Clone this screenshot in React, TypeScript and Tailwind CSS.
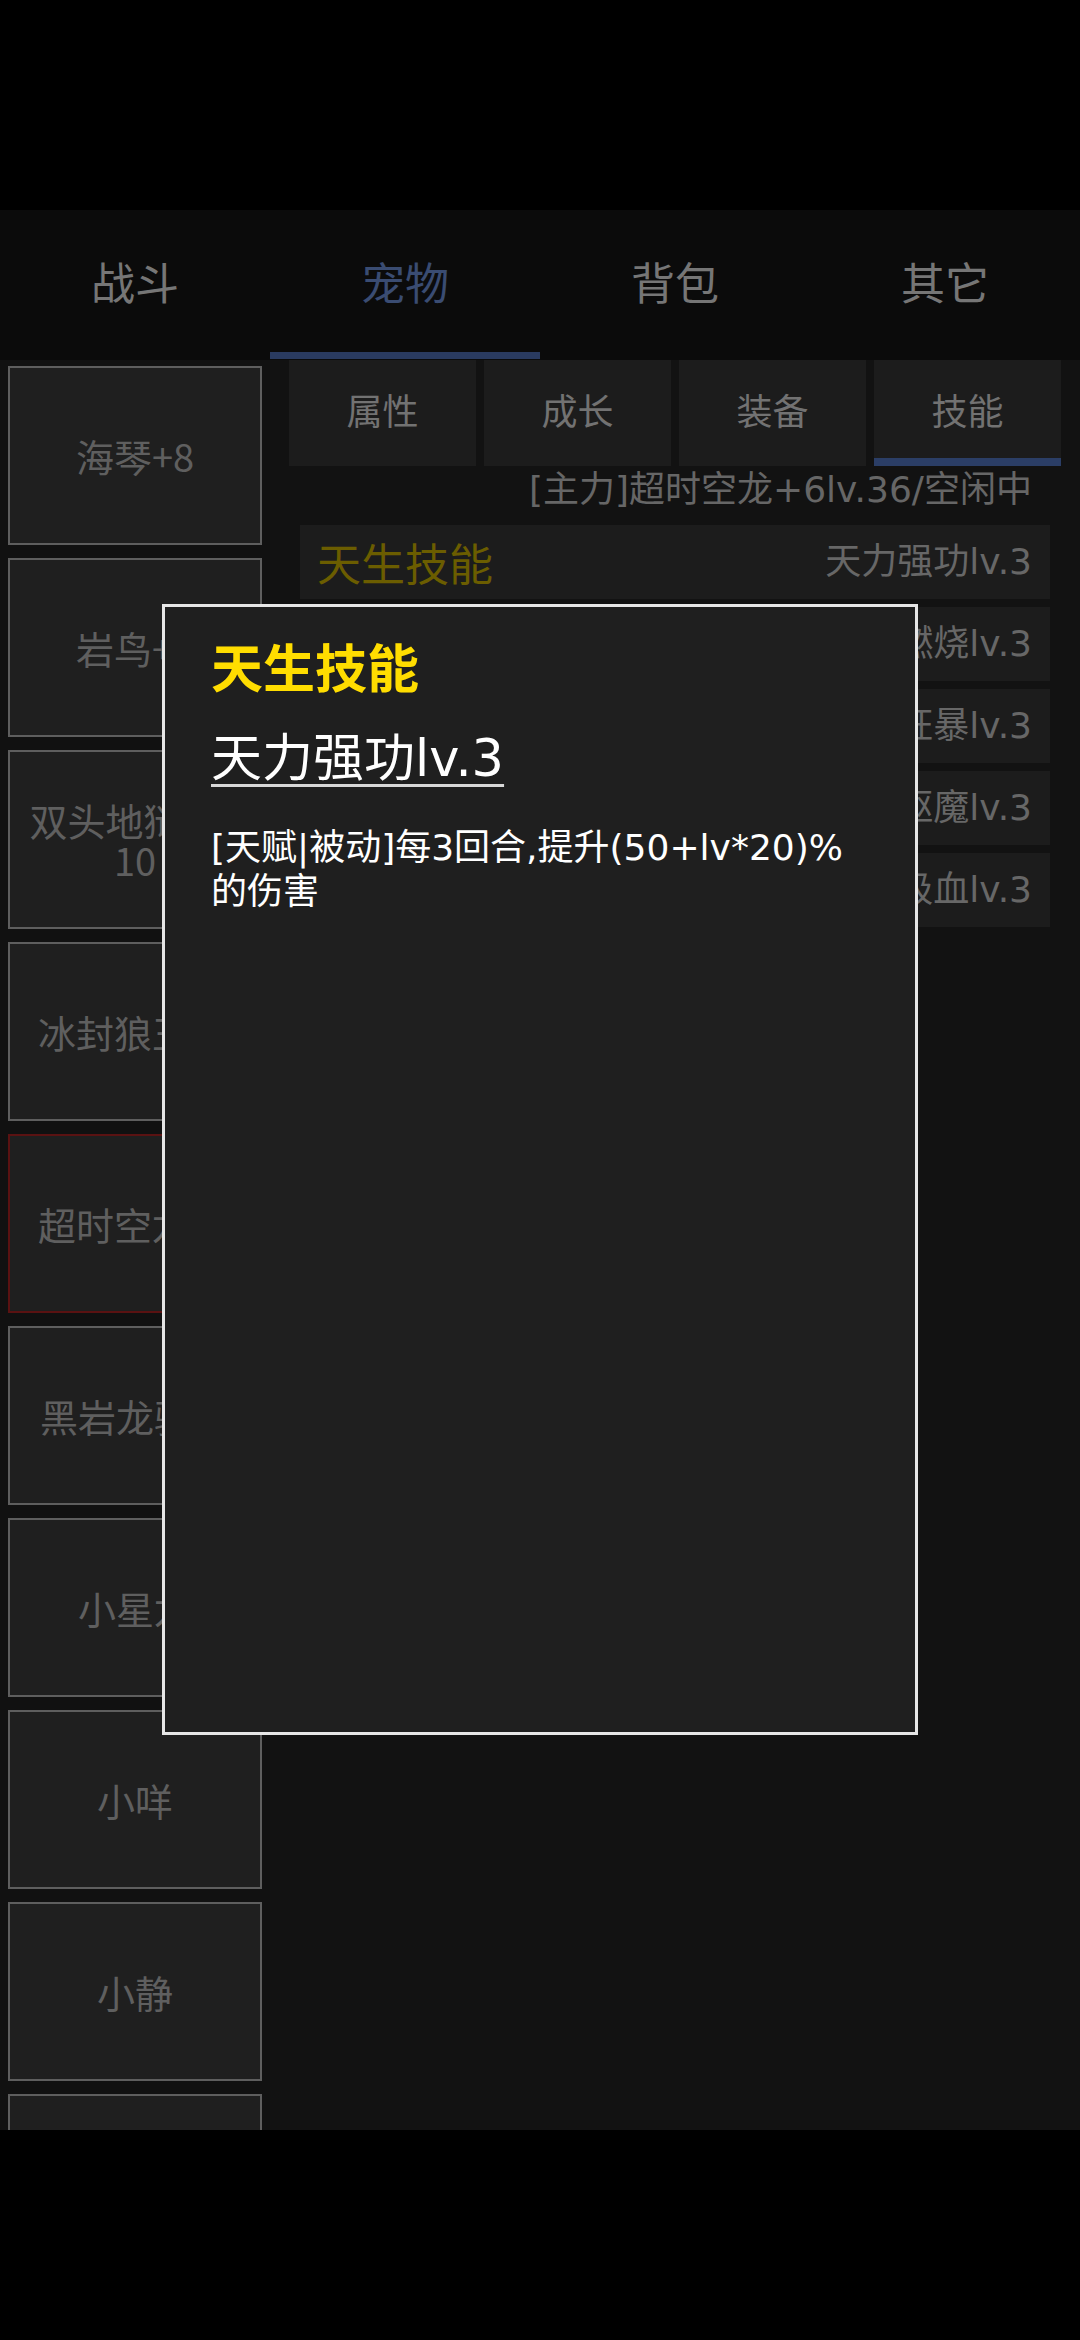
import { useState } from "react";

const tabs = ["战斗", "宠物", "背包", "其它"];
const subTabs = ["属性", "成长", "装备", "技能"];

const pets: { name: React.ReactNode; selected?: boolean }[] = [
    { name: "海琴+8" },
    { name: "岩鸟+7" },
    { name: <>双头地狱犬+<br />10</> },
    { name: "冰封狼王+5" },
    { name: "超时空龙+6", selected: true },
    { name: "黑岩龙骑士" },
    { name: "小星龙" },
    { name: "小咩" },
    { name: "小静" },
    { name: "小羽" },
];

const skills = [
    { label: "天生技能", value: "天力强功lv.3" },
    { label: "", value: "烈焰燃烧lv.3" },
    { label: "", value: "嗜血狂暴lv.3" },
    { label: "", value: "神圣驱魔lv.3" },
    { label: "", value: "生命吸血lv.3" },
];

export default function App() {
    const [tab] = useState(1);
    const [subTab] = useState(3);

    return (
        <div className="relative w-[1080px] h-[2340px] bg-black flex flex-col overflow-hidden font-['Noto_Sans_CJK_SC',sans-serif]">
            {/* TOP SPACE */}
            <div className="h-[210px] shrink-0" />

            {/* MAIN TABS */}
            <div className="h-[150px] shrink-0 grid grid-cols-4 bg-[#0b0b0b]">
                {tabs.map((t, i) => (
                    <div key={t} className="flex flex-col">
                        <div
                            className={`flex-1 flex items-center justify-center text-[44px] ${i === tab ? "text-[#3a4c72]" : "text-[#767676]"}`}
                        >
                            {t}
                        </div>
                        <div className={`h-[7px] ${i === tab ? "bg-[#2a3b60]" : ""}`} />
                        <div className="h-[1px]" />
                    </div>
                ))}
            </div>

            {/* CONTENT */}
            <div className="h-[1770px] shrink-0 flex bg-[#121212] overflow-hidden">

                {/* PET LIST */}
                <div className="w-[270px] shrink-0 flex flex-col gap-[13px] pt-[6px] pl-[8px] pr-[8px] bg-[#111111]">
                    {pets.map((p, i) => (
                        <div
                            key={i}
                            className={`h-[179px] shrink-0 flex items-center justify-center text-center bg-[#1f1f1f] border-2 text-[38px] leading-[40px] text-[#5f5f5f] ${p.selected ? "border-[#5a1212]" : "border-[#5e5e5e]"}`}
                        >
                            <span>{p.name}</span>
                        </div>
                    ))}
                </div>

                {/* RIGHT PANEL */}
                <div className="flex-1 flex flex-col">

                    {/* SUB TABS */}
                    <div className="grid grid-cols-4 gap-[8px] px-[19px] h-[106px]">
                        {subTabs.map((s, i) => (
                            <div key={s} className="flex flex-col bg-[#1c1c1c]">
                                <div className="flex-1 flex items-center justify-center text-[36px] text-[#727272]">
                                    {s}
                                </div>
                                <div className={`h-[8px] ${i === subTab ? "bg-[#2b3e66]" : ""}`} />
                            </div>
                        ))}
                    </div>

                    {/* STATUS */}
                    <div className="h-[48px] flex items-center justify-end pr-[48px] text-[36px] text-[#666666] whitespace-nowrap font-['DejaVu_Sans','Noto_Sans_CJK_SC',sans-serif]">
                        [主力]超时空龙+6lv.36/空闲中
                    </div>

                    {/* SKILLS */}
                    <div className="flex flex-col gap-[8px] px-[30px] mt-[11px]">
                        {skills.map((s, i) => (
                            <div key={i} className="h-[74px] flex items-center justify-between pl-[17px] pr-[18px] bg-[#1c1c1c]">
                                <span className="text-[44px] text-[#6b5d00]">{s.label}</span>
                                <span className="text-[36px] text-[#676767] font-['DejaVu_Sans','Noto_Sans_CJK_SC',sans-serif]">{s.value}</span>
                            </div>
                        ))}
                    </div>
                </div>
            </div>

            {/* BOTTOM */}
            <div className="flex-1 bg-black" />

            {/* SKILL DETAIL MODAL */}
            <div className="absolute left-[162px] top-[604px] w-[756px] h-[1131px] bg-[#1f1f1f] border-[3px] border-[#e6e6e6] px-[46px] pt-[28px] font-['DejaVu_Sans','Noto_Sans_CJK_SC',sans-serif]">
                <div className="text-[52px] leading-[70px] font-bold text-[#ffdd00]">天生技能</div>
                <div className="mt-[24px] text-[51px] leading-[60px] text-white">
                    <span className="underline underline-offset-[8px] decoration-[3px] decoration-[#d8d8d8]">天力强功lv.3</span>
                </div>
                <div className="mt-[37px] text-[36px] leading-[44px] text-white whitespace-nowrap">
                    [天赋|被动]每3回合,提升(50+lv*20)%<br />的伤害
                </div>
            </div>
        </div>
    );
}
